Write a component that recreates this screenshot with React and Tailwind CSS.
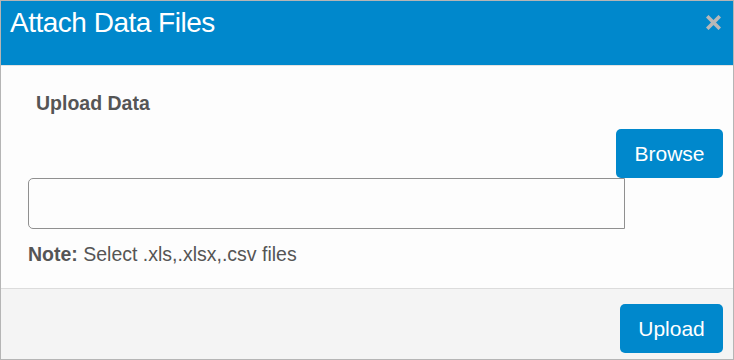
export default function App() {
  return (
    <div className="w-[734px] h-[360px] border border-[#b5b5b5] flex flex-col bg-[#fdfdfd]" style={{ fontFamily: '"Liberation Sans", Arial, sans-serif' }}>
      <div className="h-[64px] bg-[#0088cc] flex items-start justify-between pl-[9px] pr-[12px] shrink-0">
        <div className="text-white text-[28px] tracking-[-0.5px] leading-none mt-[8px]">Attach Data Files</div>
        <svg className="mt-[14px]" width="15" height="15" viewBox="0 0 15 15">
          <path d="M2.5 2.5 L12.5 12.5 M12.5 2.5 L2.5 12.5" stroke="#b8b8b8" strokeWidth="3.6" strokeLinecap="square" />
        </svg>
      </div>
      <div className="h-px bg-[#e2e2e2] shrink-0" />
      <div className="flex-1 flex flex-col pl-[27px] pr-[10px]">
        <div className="text-[#555] font-bold text-[19.5px] leading-[20px] mt-[27px] ml-[8px]">Upload Data</div>
        <div className="flex justify-end mt-[16px]">
          <button className="w-[107px] h-[49px] bg-[#0088cc] text-white text-[21px] rounded-[5px]">Browse</button>
        </div>
        <div className="w-[597px] h-[51px] border border-[#909090] rounded-l-[5px] bg-[#fdfdfd]" />
        <div className="text-[#555] text-[19.5px] leading-[20px] mt-[15px]"><span className="font-bold">Note:</span> Select .xls,.xlsx,.csv files</div>
      </div>
      <div className="h-[71px] shrink-0 border-t border-[#dcdcdc] bg-[#f4f4f4] flex items-start justify-end pr-[10px] pt-[15px]">
        <button className="w-[103px] h-[49px] bg-[#0088cc] text-white text-[21px] rounded-[5px]">Upload</button>
      </div>
    </div>
  );
}
